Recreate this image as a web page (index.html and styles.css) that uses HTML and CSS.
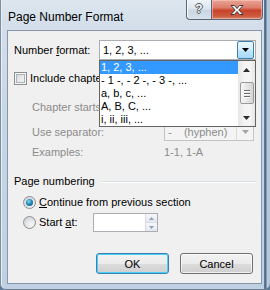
FILE: index.html
```html
<!DOCTYPE html>
<html>
<head>
<meta charset="utf-8">
<link rel="stylesheet" href="styles.css">
</head>
<body>
<div class="window">
  <div class="titlebar">
    <span class="title">Page Number Format</span>
    <div class="caption-buttons">
      <div class="cap-btn help"><span class="help-glyph">?</span></div>
      <div class="cap-btn close">
        <svg width="16" height="12" viewBox="0 0 16 12"><path d="M2 1.5h3.5L8 4.5l2.5-3H14L9.8 6 14 10.5h-3.5L8 7.5l-2.5 3H2L6.2 6z" fill="#fff" stroke="#3b3b3b" stroke-width="1"/></svg>
      </div>
    </div>
  </div>
  <div class="client">
    <div class="row row-format">
      <span class="lbl lbl-format">Number <u>f</u>ormat:</span>
      <div class="combo-wrap">
        <div class="combo combo-format">
          <span class="combo-text">1, 2, 3, ...</span>
          <span class="combo-arrow hot"><svg width="7" height="4" viewBox="0 0 7 4"><path d="M0 0h7L3.5 4z" fill="#000"/></svg></span>
        </div>
        <div class="dropdown">
          <div class="items">
            <div class="item selected">1, 2, 3, ...</div>
            <div class="item">- 1 -, - 2 -, - 3 -, ...</div>
            <div class="item">a, b, c, ...</div>
            <div class="item">A, B, C, ...</div>
            <div class="item">i, ii, iii, ...</div>
          </div>
          <div class="scrollbar">
            <div class="sb-btn"><svg width="7" height="4" viewBox="0 0 7 4"><path d="M3.5 0L7 4H0z" fill="#2c2c2c"/></svg></div>
            <div class="sb-track">
              <div class="sb-thumb"><span></span><span></span><span></span></div>
            </div>
            <div class="sb-btn"><svg width="7" height="4" viewBox="0 0 7 4"><path d="M0 0h7L3.5 4z" fill="#2c2c2c"/></svg></div>
          </div>
        </div>
      </div>
    </div>

    <div class="row row-check">
      <span class="checkbox"></span>
      <span class="lbl clip clip-check">Include chapter <u>n</u>umber</span>
    </div>

    <div class="chapter">
      <div class="crow crow-style">
        <span class="lbl dim clip clip-style">Chapter starts with style:</span>
        <div class="combo disabled"><span class="combo-text"></span><span class="combo-arrow"><svg width="7" height="4" viewBox="0 0 7 4"><path d="M0 0h7L3.5 4z" fill="#a3a3a3"/></svg></span></div>
      </div>
      <div class="crow crow-sep">
        <span class="lbl dim">Use separator:</span>
        <div class="combo disabled"><span class="combo-text">-&nbsp;&nbsp;&nbsp;&nbsp;(hyphen)</span><span class="combo-arrow"><svg width="7" height="4" viewBox="0 0 7 4"><path d="M0 0h7L3.5 4z" fill="#a3a3a3"/></svg></span></div>
      </div>
      <div class="crow crow-ex">
        <span class="lbl dim">Examples:</span>
        <span class="lbl dim">1-1, 1-A</span>
      </div>
    </div>

    <div class="group-head">
      <span class="lbl">Page numbering</span>
      <span class="group-line"></span>
    </div>

    <div class="row row-radio">
      <span class="radio checked"><span class="dot"></span></span>
      <span class="lbl"><u>C</u>ontinue from previous section</span>
    </div>
    <div class="row row-radio row-start">
      <span class="radio"></span>
      <span class="lbl lbl-start">Start <u>a</u>t:</span>
      <div class="spin">
        <span class="spin-field"></span>
        <span class="spin-btns">
          <span class="spin-btn"><svg width="5" height="3" viewBox="0 0 5 3"><path d="M2.5 0L5 3H0z" fill="#8ea0bd"/></svg></span>
          <span class="spin-btn"><svg width="5" height="3" viewBox="0 0 5 3"><path d="M0 0h5L2.5 3z" fill="#8ea0bd"/></svg></span>
        </span>
      </div>
    </div>

    <div class="buttons">
      <div class="btn default">OK</div>
      <div class="btn">Cancel</div>
    </div>
  </div>
</div>
</body>
</html>
```
FILE: styles.css
```css
html, body {
  margin: 0;
  padding: 0;
}
body {
  width: 270px;
  height: 290px;
  overflow: hidden;
  background: #5a7796;
  font-family: "Liberation Sans", Arial, sans-serif;
  font-size: 11px;
  color: #000;
}
.window {
  box-sizing: border-box;
  width: 270px;
  height: 290px;
  padding: 0 8px 0 7px;
  border-radius: 0 0 6px 6px;
  background:
    linear-gradient(to right, transparent 264px, #5f7b99 264px, #4d6a8a 266px, #b7c8da 267px),
    linear-gradient(to bottom, #dde6ef 0, #d3deea 28px, #c7d6e5 120px, #bfd0e2 100%);
  box-shadow: inset 1px 0 0 #7f8d9d, inset 0 -1px 0 #6f7f92, inset 2px 0 0 #e6eef6;
}
.titlebar {
  height: 30px;
  display: flex;
  justify-content: space-between;
  align-items: flex-start;
}
.title {
  font-size: 12px;
  line-height: 14px;
  padding: 10px 0 0 1px;
  color: #000;
}
.caption-buttons {
  display: flex;
  margin-right: -1px;
}
.cap-btn {
  box-sizing: border-box;
  height: 20px;
  display: flex;
  align-items: center;
  justify-content: center;
  border: 1px solid #5a6676;
  border-top: none;
}
.help {
  width: 25px;
  border-right: none;
  border-radius: 0 0 0 4px;
  background: linear-gradient(to bottom, #eef3f8 0, #dde6ef 45%, #c9d6e4 55%, #d6e1ec 100%);
  box-shadow: inset 1px 0 0 #f7fafc;
}
.help-glyph {
  font: bold 12px "Liberation Sans", Arial, sans-serif;
  color: #f4f6f8;
  text-shadow: 1px 0 0 #555, -1px 0 0 #555, 0 1px 0 #555, 0 -1px 0 #555;
  margin-top: -1px;
}
.close {
  width: 52px;
  border-radius: 0 0 4px 0;
  background: linear-gradient(to bottom, #e9a597 0, #dd7d6b 40%, #c8432c 55%, #cc5a3f 85%, #d9866b 100%);
  box-shadow: inset 0 0 0 1px rgba(255, 210, 200, 0.5);
}
.client {
  box-sizing: border-box;
  width: 255px;
  height: 254px;
  border: 1px solid #8796a8;
  background: #f0f0f0;
  padding: 9px 5px 0 6px;
}
.row {
  display: flex;
  align-items: center;
}
.lbl {
  line-height: 13px;
  white-space: nowrap;
}
.clip {
  overflow: hidden;
}
.clip-check {
  width: 69px;
}
.clip-style {
  width: 67px;
}
.dim {
  color: #8b8b8b;
}
.row-format {
  height: 20px;
}
.lbl-format {
  width: 85px;
  flex: none;
}
.combo-wrap {
  position: relative;
  flex: 1;
  height: 20px;
}
.combo {
  box-sizing: border-box;
  height: 100%;
  display: flex;
  align-items: center;
  border: 1px solid #abadb3;
  background: #fff;
}
.combo-text {
  flex: 1;
  padding-left: 3px;
  white-space: nowrap;
  overflow: hidden;
}
.combo-arrow {
  box-sizing: border-box;
  width: 17px;
  height: 100%;
  margin-right: 1px;
  display: flex;
  align-items: center;
  justify-content: center;
}
.combo-arrow.hot {
  height: 18px;
  border: 1px solid #3c7fb1;
  border-radius: 2px;
  background: linear-gradient(to bottom, #eaf6fd 0, #d9f0fc 45%, #bee6fd 55%, #a7d9f5 100%);
}
.combo.disabled {
  background: #f4f4f4;
  border-color: #c2c4c7;
  color: #8b8b8b;
}
.combo.disabled .combo-arrow {
  margin-right: 0;
  border-left: 1px solid #dadada;
  background: #f4f4f4;
}
.dropdown {
  position: absolute;
  left: 0;
  top: 20px;
  box-sizing: border-box;
  width: 157px;
  height: 67px;
  border: 1px solid #646464;
  background: #fff;
  display: flex;
  z-index: 5;
}
.items {
  flex: 1;
}
.item {
  height: 13px;
  line-height: 13px;
  padding-left: 1px;
  white-space: nowrap;
}
.item.selected {
  background: #3399ff;
  color: #fff;
}
.scrollbar {
  width: 17px;
  display: flex;
  flex-direction: column;
  background: linear-gradient(to right, #e6e6e6, #f5f5f5 40%, #f5f5f5 70%, #e6e6e6);
}
.sb-btn {
  height: 17px;
  display: flex;
  align-items: center;
  justify-content: center;
}
.sb-track {
  flex: 1;
  padding-top: 4px;
}
.sb-thumb {
  box-sizing: border-box;
  width: 14px;
  height: 22px;
  margin-left: 2px;
  border: 1px solid #9a9a9a;
  border-radius: 2px;
  background: linear-gradient(to right, #f7f7f7, #e7e7e7 50%, #d4d4d4);
  display: flex;
  flex-direction: column;
  justify-content: center;
  align-items: center;
  gap: 2px;
}
.sb-thumb span {
  width: 6px;
  height: 1px;
  background: #6a6a6a;
  box-shadow: 0 1px 0 #fff;
}
.row-check {
  margin-top: 11px;
  height: 14px;
  gap: 3px;
}
.checkbox {
  box-sizing: border-box;
  width: 13px;
  height: 13px;
  border: 1px solid #8e8f8f;
  background: linear-gradient(135deg, #cbcfd5 0, #e6e8eb 50%, #f6f6f6 100%);
  box-shadow: inset 0 0 0 1px #f4f4f4, inset 0 0 0 2px #aeb3b9;
}
.chapter {
  padding-left: 18px;
}
.crow {
  display: grid;
  grid-template-columns: 132px 90px;
  align-items: center;
}
.crow-style {
  margin-top: 13px;
  height: 18px;
}
.crow-sep {
  margin-top: 7px;
  height: 18px;
}
.crow-ex {
  margin-top: 4px;
  height: 14px;
}
.group-head {
  margin-top: 15px;
  height: 14px;
  display: flex;
  align-items: center;
  gap: 6px;
}
.group-line {
  flex: 1;
  height: 1px;
  background: #d5dfe5;
  box-shadow: 0 1px 0 #fff;
}
.row-radio {
  padding-left: 9px;
  gap: 3px;
  margin-top: 7px;
  height: 14px;
}
.radio {
  box-sizing: border-box;
  width: 13px;
  height: 13px;
  border-radius: 50%;
  border: 1px solid #8e8f8f;
  background: radial-gradient(circle at 65% 70%, #f6f6f6 0, #e3e5e8 45%, #c6cbd1 100%);
  display: flex;
  align-items: center;
  justify-content: center;
}
.radio .dot {
  width: 7px;
  height: 7px;
  border-radius: 50%;
  background: radial-gradient(circle at 40% 35%, #8ee0f5 0, #2a8fbd 40%, #0c4e77 100%);
}
.row-start {
  margin-top: 4px;
  height: 19px;
}
.lbl-start {
  width: 51px;
}
.spin {
  box-sizing: border-box;
  width: 65px;
  height: 19px;
  border: 1px solid #abadb3;
  background: #fff;
  display: flex;
}
.spin-field {
  flex: 1;
}
.spin-btns {
  width: 11px;
  display: flex;
  flex-direction: column;
  border-left: 1px solid #d8dde4;
}
.spin-btn {
  flex: 1;
  display: flex;
  align-items: center;
  justify-content: center;
  background: linear-gradient(to bottom, #f6f7f9, #e4e8ee);
  border-bottom: 1px solid #d8dde4;
}
.spin-btn:last-child {
  border-bottom: none;
}
.buttons {
  margin-top: 21px;
  margin-right: 3px;
  display: flex;
  justify-content: flex-end;
  gap: 11px;
}
.btn {
  box-sizing: border-box;
  width: 73px;
  height: 21px;
  border: 1px solid #707070;
  border-radius: 3px;
  background: linear-gradient(to bottom, #f2f2f2 0, #ebebeb 50%, #dddddd 50%, #cfcfcf 100%);
  box-shadow: inset 0 0 0 1px rgba(255, 255, 255, 0.7);
  display: flex;
  align-items: center;
  justify-content: center;
  font-size: 11px;
}
.btn.default {
  border-color: #3c7fb1;
  box-shadow: inset 0 0 0 1px #48d0f8;
}
```
